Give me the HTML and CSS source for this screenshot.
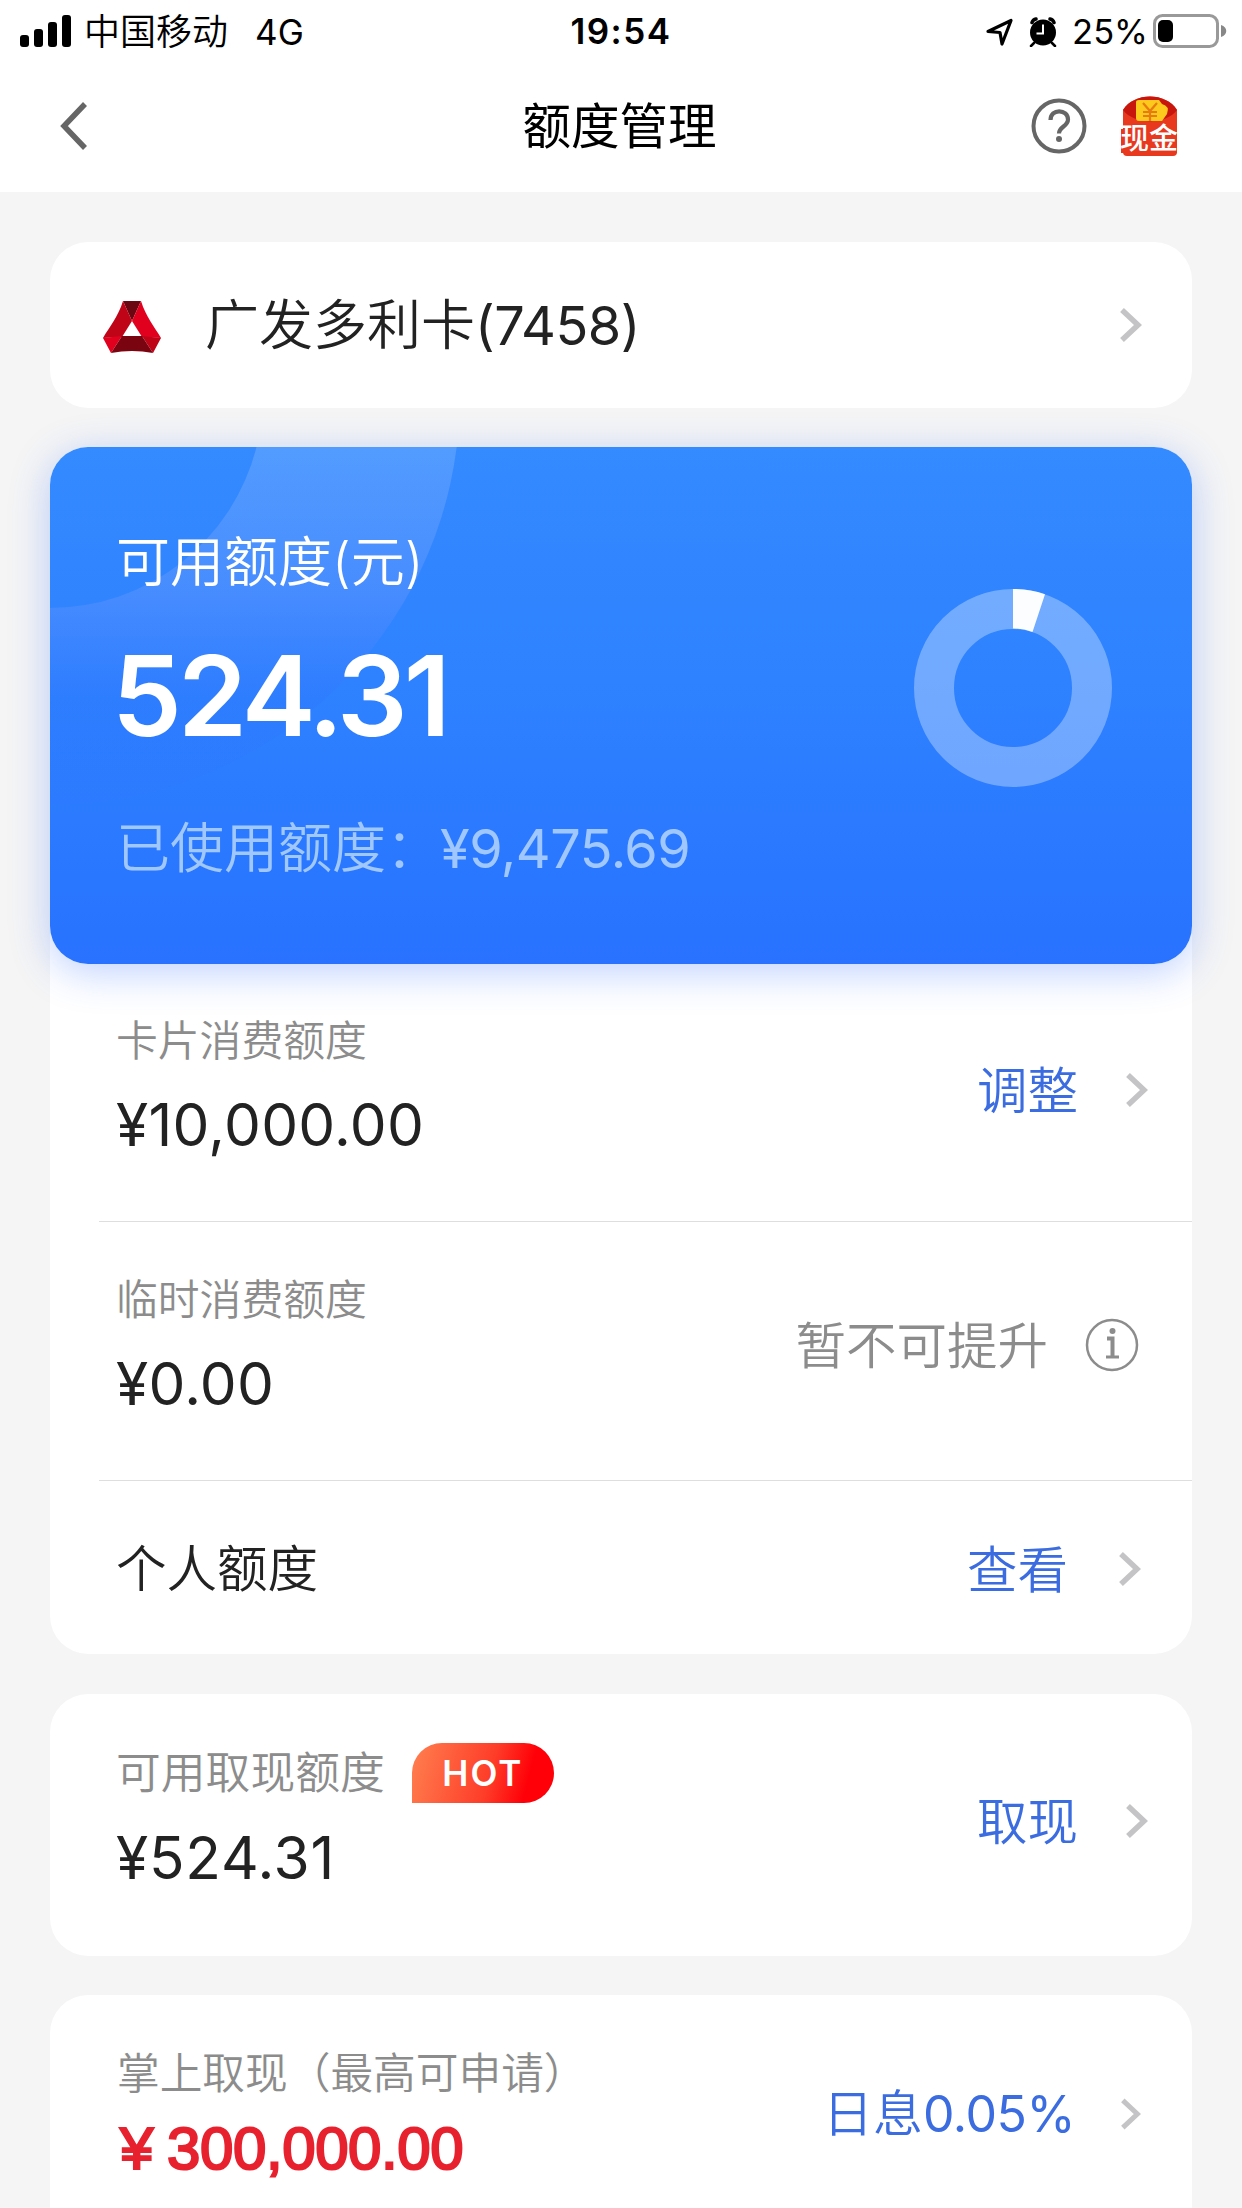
FILE: index.html
```html
<!DOCTYPE html>
<html lang="zh-CN">
<head>
<meta charset="utf-8">
<title>额度管理</title>
<link rel="stylesheet" href="styles.css">
</head>
<body>
<header class="top">
  <div class="status">
    <div class="status-left">
      <svg class="signal" width="52" height="32" viewBox="0 0 52 32"><rect x="0" y="20" width="9" height="12" rx="3"/><rect x="14" y="14" width="9" height="18" rx="3"/><rect x="28" y="7" width="9" height="25" rx="3"/><rect x="42" y="0" width="9" height="32" rx="3"/></svg>
      <span class="carrier">中国移动</span>
      <span class="network">4G</span>
    </div>
    <span class="clock">19:54</span>
    <div class="status-right">
      <svg class="location" width="30" height="30" viewBox="0 0 30 30"><path d="M3 14.500 26 3.500 17 27 15 15.500Z" fill="none" stroke="#000" stroke-width="3.200" stroke-linejoin="round"/></svg>
      <svg class="alarm" width="28" height="30" viewBox="0 0 28 30"><circle cx="14" cy="15.500" r="13"/><path d="M3 5.500Q4 2.500 7 2M25 5.500Q24 2.500 21 2" fill="none" stroke="#000" stroke-width="3.500" stroke-linecap="round"/><path d="m5 26-3 3m21-3 3 3" stroke="#000" stroke-width="2.500" stroke-linecap="round"/><path d="M14 7.500V16.500H7.500" fill="none" stroke="#fff" stroke-width="2"/></svg>
      <span class="percent">25%</span>
      <svg class="battery" width="75" height="34" viewBox="0 0 75 34"><rect x="1.500" y="1.500" width="63" height="31" rx="8" fill="none" stroke="#999" stroke-width="3"/><rect x="5" y="6" width="15" height="22" rx="5"/><path d="M68 11c7 2 7 10 0 12Z" fill="#888"/></svg>
    </div>
  </div>
  <nav class="nav">
    <svg class="back" width="28" height="48" viewBox="0 0 28 48"><path d="M26 2 5 24 26 46" fill="none" stroke="#666" stroke-width="5.500"/></svg>
    <h1 class="title">额度管理</h1>
    <div class="nav-actions">
      <svg width="56" height="56" viewBox="0 0 56 56"><circle cx="28" cy="28" r="25.500" fill="none" stroke="#666" stroke-width="4"/><path d="M19.500 22c0-12 17.500-11 17.500-.5 0 7-9 7-9 14" fill="none" stroke="#666" stroke-width="4.200"/><circle cx="28" cy="41" r="3" fill="#666"/></svg>
      <div class="cash">
        <svg width="60" height="60" viewBox="0 0 60 60"><path d="M3 14C14-4 46-4 57 14V56q0 4-4 4H7q-4 0-4-4Z" fill="#e8391f"/><path d="M1 33H57V57H1Z" fill="#e8391f"/><path d="M3 14C14-4 46-4 57 14 46 29 14 29 3 14Z" fill="#c9160d"/><path d="M16 6q0-2 3-2h20l3 4q8 2 5 10l-5 7H19q-3 0-3-3Z" fill="#fcc91c"/><path d="m23 7 7 8 7-8M30 15v10M23 16h14M23 20h14" fill="none" stroke="#e77a10" stroke-width="2.200"/></svg>
        <span class="cash-label">现金</span>
      </div>
    </div>
  </nav>
</header>

<main class="page">
  <section class="card account">
    <svg class="bank" width="58" height="52" viewBox="0 0 58 52"><path d="M20 0h18L29 20Z" fill="#6b0710"/><path d="M20 0 29 20 19 36 0 37C7 25 15 16 20 0Z" fill="#c00418"/><path d="M38 0 29 20 39 36 58 37C51 25 43 16 38 0Z" fill="#e2001f"/><path d="M0 37 19 35 8 52Z" fill="#e2001f"/><path d="M58 37 39 35 50 52Z" fill="#c00418"/><path d="M19 35H39L50 52Q29 48 8 52Z" fill="#7a0410"/></svg>
    <span class="account-name">广发多利卡<span class="digits">(7458)</span></span>
    <svg class="chevron" width="22" height="34" viewBox="0 0 22 34"><path d="M2 2 18 17 2 32"/></svg>
  </section>

  <section class="card limits">
    <div class="hero">
      <svg class="rings" width="420" height="370" viewBox="0 0 420 370"><defs><linearGradient id="fade" x1="0" y1="0" x2="0" y2="370" gradientUnits="userSpaceOnUse"><stop offset="0" stop-color="#fff" stop-opacity=".15"/><stop offset=".4" stop-color="#c0b0ff" stop-opacity=".16"/><stop offset=".68" stop-color="#3060ff" stop-opacity=".12"/><stop offset="1" stop-color="#3060ff" stop-opacity=".02"/></linearGradient></defs><path fill="url(#fade)" d="M206.500 0A213 213 0 0 1 0 161V358A410 410 0 0 0 406.700 0Z"/></svg>
      <div class="hero-text">
        <div class="hero-label">可用额度(元)</div>
        <div class="hero-amount">524.31</div>
        <div class="hero-used">已使用额度：<span class="digits">¥9,475.69</span></div>
      </div>
      <svg class="donut" width="198" height="198" viewBox="0 0 198 198"><circle cx="99" cy="99" r="79" fill="none" stroke="#fff" stroke-opacity=".32" stroke-width="40"/><path d="M99 0A99 99 0 0 1 131 5.300L118.500 43A60 60 0 0 0 99 39.500Z" fill="#fbfdff"/></svg>
    </div>
    <div class="row">
      <div class="row-text"><div class="label">卡片消费额度</div><div class="amount">¥10,000.00</div></div>
      <div class="action"><span>调整</span><svg class="chevron" width="22" height="34" viewBox="0 0 22 34"><path d="M2 2 18 17 2 32"/></svg></div>
    </div>
    <div class="row lined">
      <div class="row-text"><div class="label">临时消费额度</div><div class="amount">¥0.00</div></div>
      <div class="action muted"><span>暂不可提升</span><svg width="54" height="54" viewBox="0 0 54 54" fill="none" stroke="#8c8c8c"><circle cx="27" cy="27" r="25" stroke-width="2.500"/><path d="M22 20.500h5.500V38" stroke-width="4"/><path d="M21 39h13" stroke-width="3"/><circle cx="27.500" cy="13" r="3" fill="#8c8c8c" stroke="none"/></svg></div>
    </div>
    <div class="row lined short">
      <span class="personal">个人额度</span>
      <div class="action"><span>查看</span><svg class="chevron wide" width="22" height="34" viewBox="0 0 22 34"><path d="M2 2 18 17 2 32"/></svg></div>
    </div>
  </section>

  <section class="card cashout">
    <div class="row-text">
      <div class="label big"><span>可用取现额度</span><span class="hot">HOT</span></div>
      <div class="amount">¥524.31</div>
    </div>
    <div class="action"><span>取现</span><svg class="chevron" width="22" height="34" viewBox="0 0 22 34"><path d="M2 2 18 17 2 32"/></svg></div>
  </section>

  <section class="card loan">
    <div class="row-text">
      <div class="label loan-label">掌上取现（最高可申请）</div>
      <div class="loan-amount"><span>¥</span><span>300,000.00</span></div>
    </div>
    <div class="action rate"><span>日息<span class="digits">0.05%</span></span><svg class="chevron" width="20" height="32" viewBox="0 0 22 34"><path d="M2 2 18 17 2 32"/></svg></div>
  </section>
</main>
</body>
</html>
```

FILE: styles.css
```css
* { box-sizing: border-box; }
html, body { height: 2208px; overflow: hidden; }
body {
  margin: 0;
  background: #f5f5f5;
  color: #222;
  font-family: Inter, "Noto Sans CJK SC", sans-serif;
  font-weight: 350;
}
svg { display: block; flex: none; }
span, div { white-space: nowrap; }
.digits { font-weight: 400; letter-spacing: -.5px; }

.top { height: 192px; background: #fff; color: #000; }
.status {
  display: grid;
  grid-template-columns: 1fr auto 1fr;
  height: 62px;
  padding: 0 14px 0 20px;
  line-height: 62px;
}
.status-left, .status-right { display: flex; align-items: center; }
.status-right { justify-content: flex-end; }
.signal { margin-right: 12px; margin-top: -2px; }
.carrier { font-size: 36px; margin-right: 27px; padding-top: 1px; }
.network { font-size: 35px; font-weight: 400; }
.clock { margin-right: 6px; font-size: 35px; font-weight: 600; letter-spacing: 1.5px; }
.location { margin-right: 14px; }
.alarm { margin-right: 15px; }
.percent { font-size: 34.500px; font-weight: 400; margin-right: 5px; }
.battery { margin-top: -2px; }

.nav {
  display: grid;
  grid-template-columns: 1fr auto 1fr;
  align-items: center;
  height: 129px;
  padding: 0 62px 0 59px;
}
.back { margin-top: -1px; }
.title { margin: 0; font-size: 48.500px; font-weight: 400; line-height: 128px; }
.nav-actions { display: flex; justify-content: flex-end; align-items: center; gap: 33px; margin-top: -2px; }
.cash { position: relative; }
.cash-label {
  position: absolute;
  left: 0;
  bottom: 1px;
  width: 58px;
  text-align: center;
  font-size: 29px;
  line-height: 32px;
  font-weight: 500;
  color: #fff;
}

.page { display: flex; flex-direction: column; padding: 50px 50px 0; }
.card { flex: none; background: #fff; border-radius: 38px; }
.chevron path { fill: none; stroke: #c4c4c6; stroke-width: 5.500; }

.account {
  display: flex;
  align-items: center;
  height: 166px;
  margin-bottom: 39px;
  padding: 0 50px 0 53px;
}
.bank { margin-right: 44px; margin-top: 4px; }
.account-name { flex: 1; padding-top: 1px; font-size: 54px; line-height: 80px; }

.limits { height: 1207px; margin-bottom: 40px; }
.hero {
  position: relative;
  display: flex;
  justify-content: space-between;
  height: 517px;
  padding: 81px 80px 0 66px;
  border-radius: 38px;
  color: #fff;
  background: linear-gradient(#348aff, #2e82ff 45%, #2872ff);
  box-shadow: 0 8px 40px rgba(50, 110, 255, .32);
}
.rings { position: absolute; left: 0; top: 0; border-radius: 38px 0 0 0; }
.hero-text { position: relative; }
.hero-label { font-size: 54px; line-height: 70px; }
.hero-amount {
  margin: 40px 0 0 -4px;
  font-size: 111px;
  font-weight: 600;
  line-height: 116px;
  letter-spacing: -3.800px;
}
.hero-used { margin-top: 60px; font-size: 54px; line-height: 70px; color: #a0c8ff; }
.donut { margin-top: 61px; }

.row {
  display: flex;
  justify-content: space-between;
  height: 257px;
  margin-left: 49px;
  padding: 41px 43px 0 17px;
}
.lined { height: 259px; border-top: 1px solid #dedede; padding-top: 42px; }
.short { height: 174px; padding-top: 0; align-items: center; }
.label { font-size: 41.800px; line-height: 72px; color: #8c8c8c; }
.amount { margin-top: 12px; font-size: 58.500px; font-weight: 400; line-height: 72px; letter-spacing: .3px; }
.personal { font-size: 50.500px; line-height: 72px; margin-top: 3px; }
.action {
  display: flex;
  align-items: center;
  height: 72px;
  margin-top: 49px;
  font-size: 50.500px;
  line-height: 72px;
  color: #3c6de0;
}
.action > span { padding-top: 2px; }
.action .chevron { margin-left: 48px; margin-right: 1px; }
.action .wide { margin-left: 51px; margin-right: 8px; }
.short .action { margin-top: 2px; }
.muted { color: #8c8c8c; margin-right: 10px; margin-top: 45px; }
.muted svg { margin-left: 37px; }

.cashout, .loan { display: flex; justify-content: space-between; padding: 43px 43px 0 66px; }
.cashout { height: 262px; margin-bottom: 39px; }
.cashout .action { margin-top: 48px; }
.big { display: flex; align-items: center; font-size: 44.800px; }
.cashout .amount { margin-top: 13px; letter-spacing: .8px; }
.hot {
  width: 142px;
  height: 60px;
  margin-left: 27px;
  border-radius: 30px 30px 30px 0;
  background: linear-gradient(105deg, #ff8050, #fe3c28 55%, #ff0008 80%);
  color: #fff;
  font-size: 35px;
  font-weight: 600;
  letter-spacing: 2px;
  line-height: 61px;
  text-align: center;
}
.loan { height: 262px; }
.loan-label { font-size: 42.700px; padding-left: 1px; }
.loan-amount {
  display: flex;
  gap: 14px;
  margin-top: 3px;
  padding-left: 4px;
  font-family: "Liberation Sans", sans-serif;
  font-size: 60px;
  font-weight: 400;
  letter-spacing: -.4px;
  -webkit-text-stroke: 2.200px #e8212e;
  line-height: 72px;
  color: #e8212e;
}
.loan .action { margin-top: 40px; margin-right: 7px; font-size: 50px; }
.action.rate > span { margin-right: -2px; padding-top: 0; }
```
